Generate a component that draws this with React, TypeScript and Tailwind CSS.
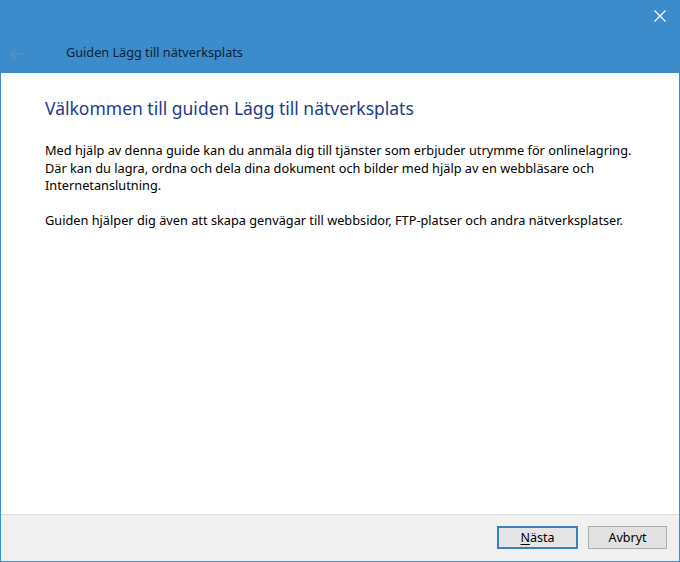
export default function App() {
  const font = { fontFamily: '"Segoe UI", "Noto Sans", "Open Sans", sans-serif' };
  return (
    <div
      className="flex h-[562px] w-[680px] flex-col border-x border-b border-[#3c8ccb] bg-white text-[12px] text-black"
      style={font}
    >
      {/* title bar */}
      <div className="relative flex h-[73px] shrink-0 items-end bg-[#3c8ccb] pb-[12px]">
        <button className="absolute right-[12px] top-[9px] text-white" aria-label="Stäng">
          <svg width="14" height="14" viewBox="0 0 14 14" fill="none" stroke="currentColor" strokeWidth="1.2">
            <path d="M1.5 1.5l11 11M12.5 1.5l-11 11" />
          </svg>
        </button>
        <div className="flex w-[65px] pl-[9px] opacity-25">
          <svg width="16" height="14" viewBox="0 0 16 14" fill="none" stroke="#b9a58a" strokeWidth="1.2">
            <path d="M15 7H2M7 1.5L1.5 7 7 12.5" />
          </svg>
        </div>
        <span className="text-[12.7px] leading-[18px] text-[#0b1f3a]">Guiden Lägg till nätverksplats</span>
      </div>

      {/* content */}
      <div className="flex-1 px-[44px] pt-[23px]">
        <h1 className="text-[17.5px] leading-[24px] text-[#1c3c8c]">
          Välkommen till guiden Lägg till nätverksplats
        </h1>
        <p className="mt-[22px] text-[12.75px] leading-[17.5px]">
          Med hjälp av denna guide kan du anmäla dig till tjänster som erbjuder utrymme för onlinelagring.
          <br />
          Där kan du lagra, ordna och dela dina dokument och bilder med hjälp av en webbläsare och
          <br />
          Internetanslutning.
        </p>
        <p className="mt-[17px] text-[12.75px] leading-[17.5px]">
          Guiden hjälper dig även att skapa genvägar till webbsidor, FTP-platser och andra nätverksplatser.
        </p>
      </div>

      {/* footer */}
      <div className="flex h-[47px] shrink-0 items-start justify-end gap-[10px] border-t border-[#dfdfdf] bg-[#f0f0f0] pr-[12px] pt-[11px]">
        <button className="h-[23px] w-[81px] border-2 border-[#3a7fc0] bg-[#e5e5e5] text-[12.5px] leading-[18px]">
          <span className="underline underline-offset-2">N</span>ästa
        </button>
        <button className="h-[23px] w-[79px] border border-[#adadad] bg-[#e1e1e1] text-[12.5px] leading-[20px]">
          Avbryt
        </button>
      </div>
    </div>
  );
}
